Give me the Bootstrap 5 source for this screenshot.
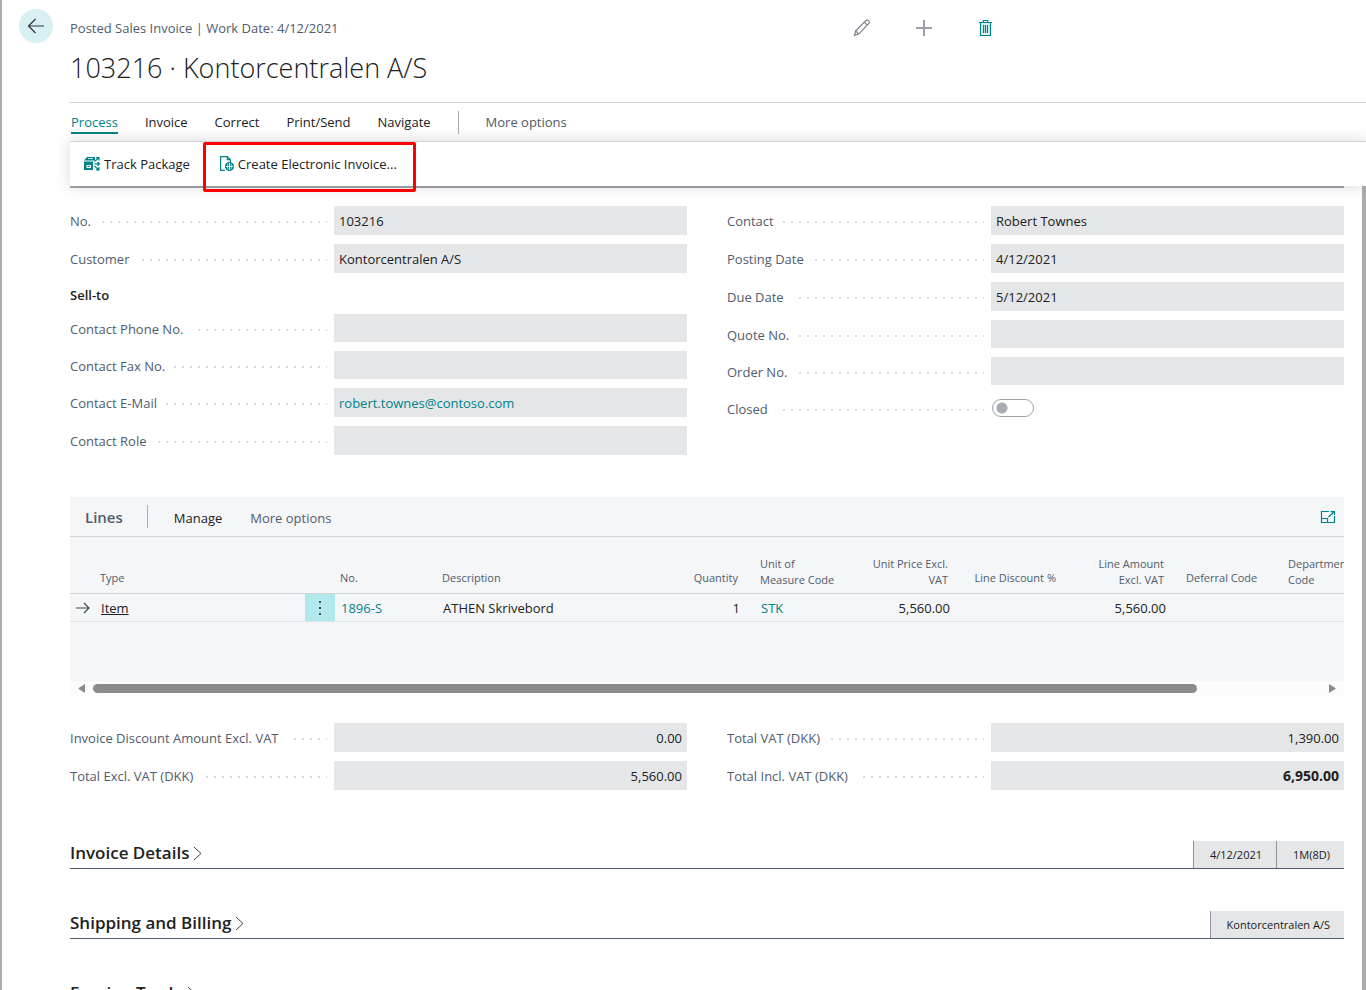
<!DOCTYPE html>
<html lang="en">
<head>
<meta charset="utf-8">
<meta name="viewport" content="width=device-width, initial-scale=1">
<title>Posted Sales Invoice</title>
<link rel="stylesheet" href="https://cdn.jsdelivr.net/npm/bootstrap@5.3.0/dist/css/bootstrap.min.css">
<style>
:root { --teal:#00838a; --slate:#505c6d; --ink:#212121; --rule:#d2d4d9; --field:#e5e6e8; }
body { font-family:"Open Sans","Noto Sans",sans-serif; font-size:13px; line-height:20px; color:var(--ink); background:#fff; }
button { font:inherit; color:inherit; background:none; border:0; padding:0; }
a { text-decoration:none; color:var(--teal); }
svg { display:block; flex:none; }
.app { height:100vh; border-left:2px solid #adadad; }
.top-bar { height:102px; }
.back-col { width:68px; padding:9px 0 0 17px; }
.back-btn { width:34px; height:34px; background:#d9f0f2; }
.heading-col { width:57.4%; padding-top:18px; }
.crumb { color:var(--slate); }
.page-title { font-size:27px; line-height:36px; font-weight:300; margin:12px 0 0; white-space:nowrap; }
.tool-col { padding-top:18px; gap:45px; color:#7a808c; }
.action-area { margin-left:68px; }
.tabs-row { height:39px; border-top:1px solid var(--rule); padding-left:1px; gap:27px; }
.tabs-row button { height:20px; }
.tabs-row .is-active { color:var(--teal); box-shadow:0 2px 0 -1px var(--teal); border-bottom:2px solid var(--teal); height:22px; margin-top:2px; box-shadow:none; }
.v-rule { width:1px; height:23px; background:#a9adb5; }
.muted { color:var(--slate); }
.command-row { height:45px; background:#fff; border-top:1px solid var(--rule); box-shadow:0 0 16px rgba(0,0,0,.16); padding-left:13px; z-index:2; }
.command-row button { gap:3px; height:44px; }
.command-row .second { margin-left:29px; }
.marked::after { content:""; position:absolute; left:-16px; right:-19px; top:0; height:50px; border:3px solid #f00; border-radius:2px; }
.scroll-area { overflow:hidden; min-height:0; border-right:4px solid #adadad; padding:0 18px 0 68px; }
.top-line { height:2px; background:#a3a6ae; margin-bottom:18px; }
.field-pair { --bs-gutter-x:40px; }
.fld { height:29px; margin-bottom:9px; }
.fld.blank { height:28px; }
.fld label { width:257px; margin-right:7px; flex:none; height:100%; color:var(--slate); background:repeating-linear-gradient(90deg,#d9dbde 0 2px,#fff 2px 8px) 0 15px/100% 2px no-repeat; }
.fld label span { display:inline-block; background:#fff; padding-right:9px; line-height:30px; height:100%; }
.fld .val { flex:1; min-width:0; height:100%; border:0; border-radius:0; background:var(--field); padding:0 5px; color:var(--ink); outline:0; display:block; }
.fld a.val { line-height:30px; color:var(--teal); }
.fld .val.grand { font-size:14px; font-weight:700; }
.group-title { font-size:13px; font-weight:600; line-height:20px; margin:12px 0 9px; }
.fld .switch { width:42px; height:18px; margin:0 0 0 1px; border:1px solid #a0a4ab; border-radius:9px; background:#fff radial-gradient(circle at 9px 8px,#a9acb4 0 5px,#fff 6px) no-repeat; appearance:none; }
.lines-part { margin-top:33px; background:#f5f6f8; }
.lines-head { height:40px; border-bottom:1px solid var(--rule); padding:0 8px 0 15px; }
.lines-head h2 { font-size:15px; font-weight:600; line-height:20px; margin:0 24px 0 0; color:var(--slate); }
.lines-head .v-rule { margin-right:26px; }
.lines-head button { padding-top:2px; }
.grid-wrap { overflow:hidden; height:144px; }
.grid-lines { width:1309px; table-layout:fixed; border-collapse:separate; border-spacing:0; }
.grid-lines th { height:57px; padding:0 11px 7px; vertical-align:bottom; font-size:11px; line-height:16px; font-weight:400; color:var(--slate); border-bottom:1px solid var(--rule); white-space:nowrap; }
.grid-lines th.two-line { padding-bottom:5px; }
.grid-lines td { height:28px; padding:0 9px 0 12px; border-bottom:1px solid #e1e3e6; white-space:nowrap; }
.grid-lines .tight { padding-left:6px; }
.grid-lines th.tight { padding-left:5px; }
.grid-lines th.flush { padding-left:0; }
.grid-lines td.flush { padding:0 0 0 1px; }
.grid-lines td.row-arrow { padding:0 0 0 6px; }
.grid-lines td.menu-cell { padding:0; background:#b2e9ec; }
.h-scroll { height:15px; background:#fcfcfc; padding:0 8px; gap:8px; }
.h-track { flex:1; }
.h-thumb { height:9px; border-radius:5px; background:#8b8b8b; width:89.9%; }
.totals { margin-top:27px; }
.fast-tabs { padding-top:42px; }
.fast-tab { border-bottom:1px solid var(--slate); height:28px; margin-bottom:42px; }
.fast-tab h2 { font-size:17px; line-height:24px; font-weight:600; margin:0; }
.fast-tab button { gap:4px; }
.tag-box { background:var(--field); border-left:1px solid #8e929a; font-size:11px; line-height:27px; padding:0 14px 0 16px; }
</style>
</head>
<body>
<div class="app d-flex flex-column">
  <header class="top-bar d-flex flex-shrink-0">
    <div class="back-col flex-shrink-0">
      <button class="back-btn rounded-circle d-flex align-items-center justify-content-center" aria-label="Back">
        <svg width="18" height="16" viewBox="0 0 18 16" fill="none" stroke="#333" stroke-width="1.2"><path d="M17 8H1.5M8.5 1l-7 7 7 7"/></svg>
      </button>
    </div>
    <div class="heading-col flex-shrink-0">
      <div class="crumb">Posted Sales Invoice | Work Date: 4/12/2021</div>
      <h1 class="page-title">103216 · Kontorcentralen A/S</h1>
    </div>
    <div class="tool-col d-flex align-items-start">
      <button aria-label="Edit"><svg width="18" height="20" viewBox="0 0 18 20" fill="none" stroke="#747b87" stroke-width="1.1"><path d="M1.500 17.500l1.200-4.700L12.800 2.700a2 2 0 0 1 2.900 0 2 2 0 0 1 0 2.900L5.700 16.100zM11.300 4.200l3 3M2.700 12.800l3 3.300"/></svg></button>
      <button aria-label="New"><svg width="16" height="20" viewBox="0 0 16 20" stroke="#9a9ea8" stroke-width="2"><path d="M0 10h16M8 2v16"/></svg></button>
      <button aria-label="Delete"><svg width="17" height="20" viewBox="0 0 17 20" fill="none" stroke="#00838a" stroke-width="1.2"><path fill="#e3f3f4" d="M3.500 4.500h10v13h-10z"/><path d="M2 4.500h13M6.300 4V2.500h4.400V4M6.500 7v8M8.500 7v8M10.500 7v8"/></svg></button>
    </div>
  </header>

  <nav class="action-area flex-shrink-0">
    <div class="tabs-row d-flex align-items-center">
      <button class="is-active">Process</button>
      <button>Invoice</button>
      <button>Correct</button>
      <button>Print/Send</button>
      <button>Navigate</button>
      <span class="v-rule"></span>
      <button class="muted">More options</button>
    </div>
    <div class="command-row d-flex align-items-center position-relative">
      <button class="d-flex align-items-center">
        <svg width="18" height="16" viewBox="0 0 18 16"><path fill="#00838a" d="M1 4.500L4 1h8v3.500zM1 5.500h9V14H1z"/><path fill="#fff" d="M3.500 9H8v3H3.500zM5 2.300h5v.8H5z"/><path fill="#00838a" d="M4.500 10H7v1H4.500z"/><path fill="none" stroke="#00838a" stroke-width="1.200" d="M11.500 5.500L15.500 2M13 1.600h3v3M11.500 7.800h5M14.500 5.800l2 2-2 2M11.500 10l4 3.500M13 13.900h3v-3"/></svg>
        <span>Track Package</span>
      </button>
      <button class="second marked d-flex align-items-center position-relative">
        <svg width="16" height="16" viewBox="0 0 16 16" fill="none"><path stroke="#00838a" stroke-width="1.200" d="M6 14.400H1.600V.6h6.700l3.100 3.100V6M8.300.6v3.100h3.100"/><circle cx="10.500" cy="10.500" r="4.500" fill="#00838a"/><path stroke="#fff" stroke-width=".9" d="M7 10.500h7M10.500 7v7"/><path stroke="#fff" stroke-width=".6" d="M9 7.500Q7.800 10.500 9 13.500M12 7.500q1.200 3 0 6"/></svg>
        <span>Create Electronic Invoice...</span>
      </button>
    </div>
  </nav>

  <main class="scroll-area flex-fill">
    <div class="top-line"></div>
    <div class="row field-pair">
      <div class="col-6">
        <div class="fld d-flex"><label for="f1"><span>No.</span></label><input id="f1" class="val" value="103216" readonly></div>
        <div class="fld d-flex"><label for="f2"><span>Customer</span></label><input id="f2" class="val" value="Kontorcentralen A/S" readonly></div>
        <h3 class="group-title">Sell-to</h3>
        <div class="fld blank d-flex"><label for="f3"><span>Contact Phone No.</span></label><input id="f3" class="val" readonly></div>
        <div class="fld blank d-flex"><label for="f4"><span>Contact Fax No.</span></label><input id="f4" class="val" readonly></div>
        <div class="fld d-flex"><label><span>Contact E-Mail</span></label><a class="val" href="mailto:robert.townes@contoso.com">robert.townes@contoso.com</a></div>
        <div class="fld d-flex"><label for="f6"><span>Contact Role</span></label><input id="f6" class="val" readonly></div>
      </div>
      <div class="col-6">
        <div class="fld d-flex"><label for="g1"><span>Contact</span></label><input id="g1" class="val" value="Robert Townes" readonly></div>
        <div class="fld d-flex"><label for="g2"><span>Posting Date</span></label><input id="g2" class="val" value="4/12/2021" readonly></div>
        <div class="fld d-flex"><label for="g3"><span>Due Date</span></label><input id="g3" class="val" value="5/12/2021" readonly></div>
        <div class="fld blank d-flex"><label for="g4"><span>Quote No.</span></label><input id="g4" class="val" readonly></div>
        <div class="fld blank d-flex"><label for="g5"><span>Order No.</span></label><input id="g5" class="val" readonly></div>
        <div class="fld blank d-flex align-items-center"><label for="g6"><span>Closed</span></label><input id="g6" class="switch" type="checkbox" role="switch"></div>
      </div>
    </div>

    <section class="lines-part">
      <div class="lines-head d-flex align-items-center">
        <h2>Lines</h2><span class="v-rule"></span>
        <button>Manage</button>
        <button class="muted ms-4 ps-1">More options</button>
        <button class="ms-auto" aria-label="Expand"><svg width="16" height="14" viewBox="0 0 16 14" fill="none" stroke="#00838a" stroke-width="1.200"><path d="M9 .5H1.500v11h13V5M1.500 7.500h6v4M8.500 6l6-5.500M10.500 .6h4V4"/></svg></button>
      </div>
      <div class="grid-wrap">
        <table class="grid-lines">
          <colgroup><col style="width:30px"><col style="width:205px"><col style="width:30px"><col style="width:96px"><col style="width:209px"><col style="width:109px"><col style="width:102px"><col style="width:108px"><col style="width:108px"><col style="width:108px"><col style="width:102px"><col style="width:102px"></colgroup>
          <thead><tr>
            <th></th><th class="flush">Type</th><th></th><th class="tight">No.</th><th>Description</th><th class="text-end">Quantity</th><th class="two-line">Unit of<br>Measure Code</th><th class="two-line text-end">Unit Price Excl.<br>VAT</th><th class="text-end">Line Discount %</th><th class="two-line text-end">Line Amount<br>Excl. VAT</th><th>Deferral Code</th><th class="two-line">Department<br>Code</th>
          </tr></thead>
          <tbody><tr>
            <td class="row-arrow"><svg width="14" height="12" viewBox="0 0 14 12" fill="none" stroke="#444" stroke-width="1.100"><path d="M0 6h12.500M8 1l5 5-5 5"/></svg></td>
            <td class="flush"><a href="#" class="text-reset text-decoration-underline">Item</a></td>
            <td class="menu-cell"><button class="w-100 d-flex justify-content-center" aria-label="Row menu"><svg width="4" height="16" fill="#42505c"><path d="M1 1h2v2H1zM1 7h2v2H1zM1 13h2v2H1z"/></svg></button></td>
            <td class="tight"><a href="#">1896-S</a></td><td>ATHEN Skrivebord</td><td class="text-end">1</td><td><a href="#">STK</a></td><td class="text-end">5,560.00</td><td></td><td class="text-end">5,560.00</td><td></td><td></td>
          </tr></tbody>
        </table>
      </div>
      <div class="h-scroll d-flex align-items-center">
        <svg width="7" height="9" fill="#8b8b8b"><path d="M7 0v9L0 4.500z"/></svg>
        <div class="h-track"><div class="h-thumb"></div></div>
        <svg width="7" height="9" fill="#8b8b8b"><path d="M0 0v9l7-4.500z"/></svg>
      </div>
    </section>

    <div class="row field-pair totals">
      <div class="col-6">
        <div class="fld d-flex"><label for="t1"><span>Invoice Discount Amount Excl. VAT</span></label><input id="t1" class="val text-end" value="0.00" readonly></div>
        <div class="fld d-flex"><label for="t2"><span>Total Excl. VAT (DKK)</span></label><input id="t2" class="val text-end" value="5,560.00" readonly></div>
      </div>
      <div class="col-6">
        <div class="fld d-flex"><label for="t3"><span>Total VAT (DKK)</span></label><input id="t3" class="val text-end" value="1,390.00" readonly></div>
        <div class="fld d-flex"><label for="t4"><span>Total Incl. VAT (DKK)</span></label><input id="t4" class="val grand text-end" value="6,950.00" readonly></div>
      </div>
    </div>

    <div class="fast-tabs">
      <section class="fast-tab d-flex justify-content-between">
        <h2><button class="d-flex align-items-center">Invoice Details <svg width="9" height="15" viewBox="0 0 9 15" fill="none" stroke="#444"><path d="M1 1l7 6.500L1 14"/></svg></button></h2>
        <div class="d-flex"><span class="tag-box">4/12/2021</span><span class="tag-box">1M(8D)</span></div>
      </section>
      <section class="fast-tab d-flex justify-content-between">
        <h2><button class="d-flex align-items-center">Shipping and Billing <svg width="9" height="15" viewBox="0 0 9 15" fill="none" stroke="#444"><path d="M1 1l7 6.500L1 14"/></svg></button></h2>
        <div class="d-flex"><span class="tag-box">Kontorcentralen A/S</span></div>
      </section>
      <section class="fast-tab d-flex justify-content-between">
        <h2><button class="d-flex align-items-center">Foreign Trade <svg width="9" height="15" viewBox="0 0 9 15" fill="none" stroke="#444"><path d="M1 1l7 6.500L1 14"/></svg></button></h2>
      </section>
    </div>
  </main>
</div>
<script src="https://cdn.jsdelivr.net/npm/bootstrap@5.3.0/dist/js/bootstrap.bundle.min.js"></script>
</body>
</html>
